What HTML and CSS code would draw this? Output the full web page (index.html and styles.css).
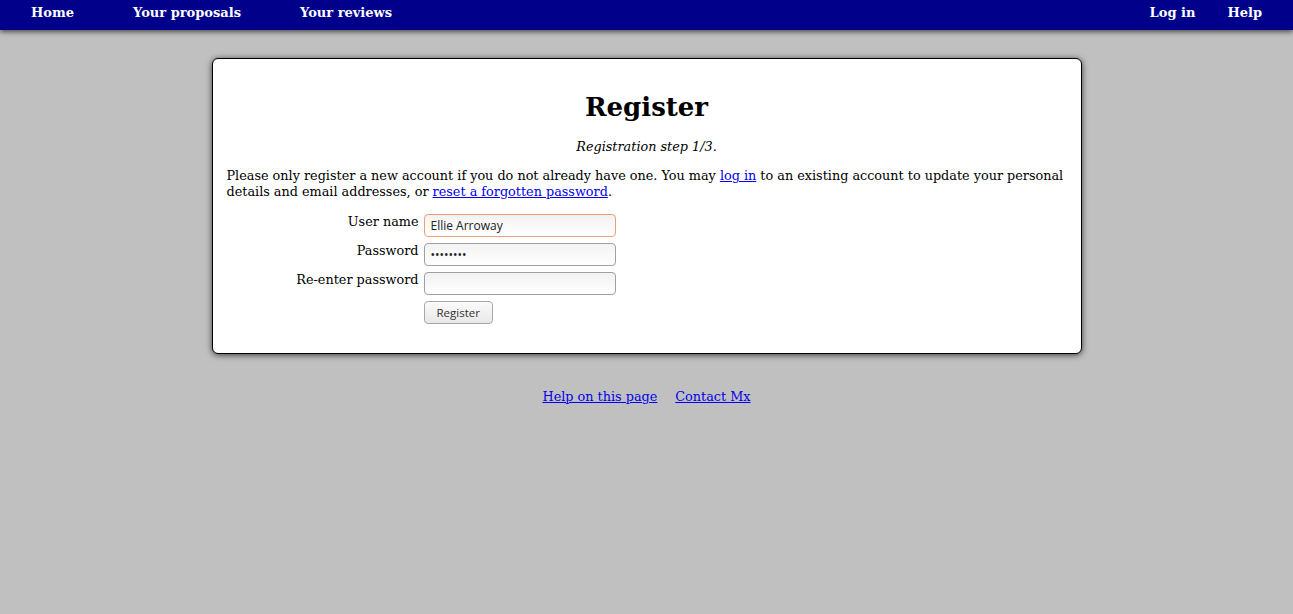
FILE: index.html
```html
<!DOCTYPE html>
<html lang="en">
<head>
  <meta charset="UTF-8" />
  <title>Register</title>
  <link rel="stylesheet" href="styles.css">
</head>
<body>
  <nav class="navbar">
    <div class="nav-left">
      <a href="#">Home</a>
      <a href="#">Your proposals</a>
      <a href="#">Your reviews</a>
    </div>
    <div class="nav-right">
      <a href="#">Log in</a>
      <a href="#">Help</a>
    </div>
  </nav>

  <div class="card">
    <h1>Register</h1>
    <p class="step">Registration step 1/3.</p>
    <p class="intro">Please only register a new account if you do not already have one. You may <a href="#">log in</a> to an existing account to update your personal details and email addresses, or <a href="#">reset a forgotten password</a>.</p>

    <form class="reg-form">
      <label for="user">User name</label>
      <input id="user" class="focused" type="text" value="Ellie Arroway">
      <label for="pw">Password</label>
      <input id="pw" type="password" value="secret12">
      <label for="pw2">Re-enter password</label>
      <input id="pw2" type="password">
      <span></span>
      <div><button type="button">Register</button></div>
    </form>
  </div>

  <footer class="footer">
    <a href="#">Help on this page</a>
    <a href="#">Contact Mx</a>
  </footer>
</body>
</html>
```

FILE: styles.css
```css
/* Base */
body {
  margin: 0;
  background: #c0c0c0;
  font-family: "DejaVu Serif", serif;
  font-size: 12.8px;
  color: #000;
}

a {
  color: #0000ee;
}

/* Top bar */
.navbar {
  display: flex;
  justify-content: space-between;
  background: #00008b;
  height: 28px;
  padding-top: 2px;
  box-shadow: 0 2px 5px rgba(0,0,0,0.6);
}

.navbar a {
  color: #fff;
  text-decoration: none;
  font-weight: bold;
  font-size: 13px;
  line-height: 22px;
}

.nav-left {
  display: flex;
  gap: 59px;
  padding-left: 31px;
}

.nav-right {
  display: flex;
  gap: 32px;
  padding-right: 31px;
}

/* Card */
.card {
  width: 840px;
  margin: 28px auto 0;
  padding: 16px 14px 29px;
  background: #fff;
  border: 1px solid #000;
  border-radius: 6px;
  box-shadow: 0 1px 6px rgba(0,0,0,0.7);
}

.card h1 {
  text-align: center;
  font-size: 26px;
  margin: 17px 0 17px;
  line-height: 30px;
}

.step {
  text-align: center;
  font-style: italic;
  margin: 0 0 14px;
}

.intro {
  margin: 0 0 14px;
  line-height: 16px;
}

/* Form */
.reg-form {
  display: grid;
  grid-template-columns: 192px 192px;
  column-gap: 5px;
  row-gap: 6px;
}

.reg-form label {
  text-align: right;
}

.reg-form input {
  width: 192px;
  height: 23px;
  box-sizing: border-box;
  border: 1px solid #a0a0a0;
  border-radius: 4px;
  background: linear-gradient(#f2f2f2, #ffffff);
  font-family: "Open Sans", sans-serif;
  font-size: 12px;
  padding: 0 6px;
  color: #222;
}

.reg-form input.focused {
  border-color: #e9a07a;
}

.reg-form button {
  height: 23px;
  padding: 0 12px;
  border: 1px solid #a8a8a8;
  border-radius: 4px;
  background: linear-gradient(#fbfbfb, #e8e8e8);
  font-family: "Open Sans", sans-serif;
  font-size: 11.5px;
  color: #333;
}

/* Footer */
.footer {
  display: flex;
  justify-content: center;
  gap: 18px;
  margin-top: 35px;
}
```
